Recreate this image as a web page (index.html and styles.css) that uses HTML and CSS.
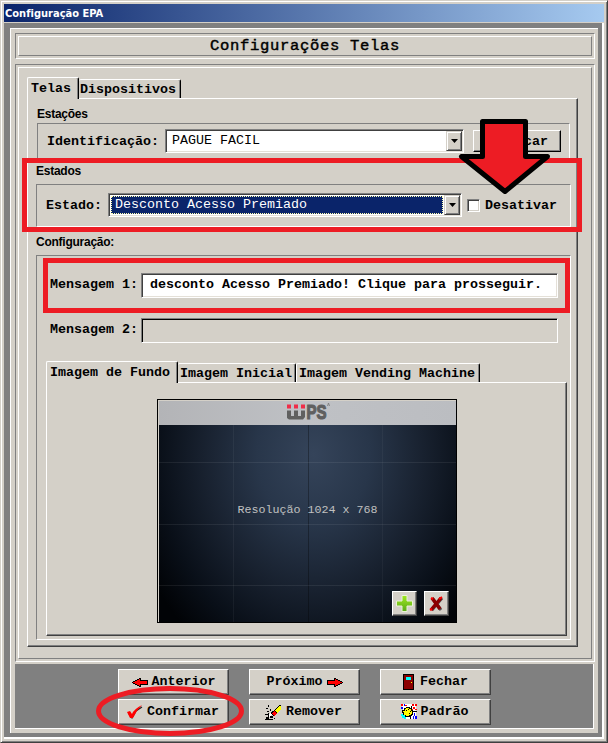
FILE: index.html
```html
<!DOCTYPE html>
<html lang="pt-BR">
<head>
<meta charset="utf-8">
<title>Configuração EPA</title>
<link rel="stylesheet" href="styles.css">
</head>
<body>
<div class="window">
  <div class="titlebar"><span>Configuração EPA</span></div>
  <div class="client">
    <div class="panel">
      <div class="header"><h1>Configurações Telas</h1></div>
      <div class="main"><div class="main-inner">
        <div class="tabs">
          <div class="tab active tab-telas">Telas</div>
          <div class="tab tab-disp">Dispositivos</div>
        </div>
        <div class="page page-outer">
          <div class="legend legend-first">Estações</div>
          <div class="group stations">
            <span class="label label-ident">Identificação:</span>
            <div class="combo combo-ident"><span class="value">PAGUE FACIL</span><span class="drop"><svg width="7" height="4"><path d="M0 0h7L3.500 4z"/></svg></span></div>
            <button class="search">Buscar</button>
          </div>
          <div class="legend legend-states">Estados</div>
          <div class="group states">
            <span class="label label-state">Estado:</span>
            <div class="combo combo-state"><span class="value selected">Desconto Acesso Premiado</span><span class="drop"><svg width="7" height="4"><path d="M0 0h7L3.500 4z"/></svg></span></div>
            <span class="check"></span><span class="label">Desativar</span>
          </div>
          <div class="legend legend-config">Configuração:</div>
          <div class="group config">
            <div class="field"><span class="label label-msg">Mensagem 1:</span><div class="input">desconto Acesso Premiado! Clique para prosseguir.</div></div>
            <div class="field"><span class="label label-msg">Mensagem 2:</span><div class="input disabled"></div></div>
            <div class="tabs tabs-images">
              <div class="tab active tab-fundo">Imagem de Fundo</div>
              <div class="tab tab-inicial">Imagem Inicial</div>
              <div class="tab tab-vending">Imagem Vending Machine</div>
            </div>
            <div class="page page-inner">
              <div class="preview">
                <div class="band">
                  <svg class="logo" width="46" height="24" viewBox="0 0 46 24">
                    <text x="19.500" y="18" textLength="20" lengthAdjust="spacingAndGlyphs">PS</text>
                    <path class="stem" d="M0 9.500h4V15h3V9.500h4V15h3V9.500h4V16l-2 2.500H2L0 17z"/>
                    <path class="red" d="M0 3.500h4v4H0zM7 3.500h4v4H7zM14 3.500h4v4h-4z"/>
                    <path class="mark" d="M40.500 5l1-3 1 3"/>
                  </svg>
                </div>
                <div class="canvas">
                  <span class="resolution">Resolução 1024 x 768</span>
                  <div class="actions">
                    <button class="mini"><svg width="17" height="17"><defs><linearGradient id="g" x2="0" y2="1"><stop stop-color="#a0e820"/><stop offset="1" stop-color="#5aaa18"/></linearGradient></defs><path d="M6 .5h5V6h5.500v5H11v5.500H6V11H.5V6H6z" fill="url(#g)" stroke="#e9f3d5"/></svg></button>
                    <button class="mini"><svg width="15" height="16"><path d="M4 3l8 11M13 2L3 14" stroke="#555" stroke-width="3"/><path d="M3 2l8 11M12 2L2 14" stroke="#8b0000" stroke-width="3.500"/><path d="M10 3l3-2M1 14l2-1M2 2l2 1" stroke="#f00" stroke-width="2"/></svg></button>
                  </div>
                </div>
              </div>
            </div>
          </div>
        </div>
      </div></div>
      <div class="footer">
        <button class="command"><svg class="px" width="16" height="9"><path d="M0 4h1V3h2V2h2V1h2V0h2v2h7v5H9v2H7V8H5V7H3V6H1V5H0z"/><path fill="red" d="M1 4h2V3h2V2h2V1h1v2h7v3H8v2H7V7H5V6H3V5H1z"/></svg>Anterior</button>
        <button class="command">Próximo<svg class="px" width="16" height="9"><path d="M16 4h-1V3h-2V2h-2V1H9V0H7v2H0v5h7v2h2V8h2V7h2V6h2V5h1z"/><path fill="red" d="M15 4h-2V3h-2V2H9V1H8v2H1v3h7v2h1V7h2V6h2V5h2z"/></svg></button>
        <button class="command"><svg class="px door" width="11" height="16"><path d="M0 0h11v16H0z"/><path fill="#8b0000" d="M1 1h9v14H1z"/><path fill="#0ff" d="M3 3h5v3H3z"/><path fill="#ff0" d="M8 8h1v1H8z"/></svg>Fechar</button>
        <button class="command confirm"><svg width="16" height="14"><path d="M1 8l3 4L8 5l6-4" fill="none" stroke="#222" stroke-width="1.200" transform="translate(1 1)"/><path fill="red" d="M0 7l3-1 2 3q2-5 10-9-6 6-9 13H3z"/></svg>Confirmar</button>
        <button class="command shifted"><svg class="px" width="17" height="17"><path d="M8 7l6-6h2v4l-7 7-4-3z"/><path fill="#ff0" d="M10 6l4-4h2v3l-4 4z"/><path fill="red" d="M7 9l2-2 3 2-3 3z"/><path fill="#fff" d="M5 9l2 1-2 3-2-1z"/><path d="M3 1h1v2H3zM1 4h2v1H1zM5 5h1v2H5zM2 7h2v1H2zM0 10h3v1H0zM3 9h1v4H3zM5 12h3v2H5zM1 13h3v2h4v1H0v-1h1zM9 14h1v1H9z"/></svg>Remover</button>
        <button class="command shifted"><svg class="px" width="16" height="16"><path fill="#fff" d="M1 0h14v15H3z"/><path fill="red" d="M0 0h2v2H0zM4 1h2v1H4zM11 0h2v2h-2zM14 0h2v2h-2zM12 3h2v2h-2zM10 5h2v1h-2zM14 5h2v1h-2z"/><path fill="#00f" d="M0 3h2v2H0zM3 0h1v2H3zM13 9h1v3h-1zM12 12h1v3h-1zM14 12h2v3h-2z"/><path d="M5 3h4v1h2v2h1v5h-1v1H9v1H4v-1H2V9H1V6h2V4h2zM10 2h1v2h-1zM12 7h4v1h-4zM9 12h1v3H9z"/><path fill="#ff0" d="M5 4h3v1h2v2h1v3h-1v1H8v1H5v-1H3V8H2V7h2V5h1z"/><path d="M5 6h1v1H5zM7 5h1v1H7zM9 7h1v1H9zM8 9h1v1H8z"/><path fill="#0ff" d="M0 10h2v1h2v2h1v2H3v-1H1v-2H0z"/></svg>Padrão</button>
      </div>
    </div>
  </div>
  <div class="highlight highlight-states"></div>
  <div class="highlight highlight-message"></div>
  <svg class="pointer" width="94" height="78"><path d="M24.500 3.500h43v35h22L47 73.500 3.500 38.500h21z"/></svg>
  <svg class="ring" width="148" height="50"><ellipse cx="74" cy="25" rx="71.500" ry="22.500"/></svg>
</div>
</body>
</html>
```
FILE: styles.css
```css
* { box-sizing: border-box; }
body { margin: 0; }
h1 { margin: 0; }
svg { display: block; flex: none; }
.px { shape-rendering: crispEdges; }

.window {
  position: relative;
  width: 608px;
  height: 743px;
  padding: 3px;
  background: #d4d0c8;
  border: 1px solid;
  border-color: #d4d0c8 #404040 #404040 #d4d0c8;
  box-shadow: inset 1px 1px #fff, inset -1px -1px #808080;
  font: bold 13.333px/16px "Liberation Mono", monospace;
  color: #000;
  overflow: hidden;
}
.titlebar {
  width: 600px;
  height: 18px;
  padding-left: 1px;
  background: linear-gradient(90deg, #0a246a, #a6caf0);
  color: #fff;
  font: bold 11px/19px "DejaVu Sans Condensed", "DejaVu Sans", sans-serif;
  letter-spacing: .02px;
}
.client {
  width: 600px;
  height: 716px;
  margin-top: 1px;
  padding: 5px 4px 4px 6px;
  background: #808080;
  border: solid #fff;
  border-width: 0 2px 2px 0;
}
.panel {
  height: 705px;
  padding: 4px 3px 4px 4px;
  background: #d4d0c8;
  border: solid #fff;
  border-width: 1px 0 0 1px;
}
.header, .main {
  padding: 2px;
  border: 1px solid;
  border-color: #808080 #fff #fff #808080;
}
.header { height: 26px; }
.header h1, .main-inner {
  height: 100%;
  border: 1px solid;
  border-color: #fff #808080 #808080 #fff;
}
.header h1 {
  font-size: 15.500px;
  font-weight: normal;
  -webkit-text-stroke: .45px #000;
  line-height: 18px;
  letter-spacing: .7px;
  text-align: center;
}
.main { height: 598px; margin-top: 5px; }
.main-inner { padding: 9px 13px 0 8px; }

.tabs { display: flex; align-items: flex-end; height: 21px; }
.tab {
  height: 19px;
  padding: 2px 0 0 1px;
  border: solid;
  border-width: 1px 1px 0 0;
  border-color: #fff #000 #000 #fff;
  border-radius: 2px 2px 0 0;
  box-shadow: inset -1px 0 #808080;
  white-space: nowrap;
}
.tab.active {
  height: 22px;
  margin-bottom: -1px;
  padding: 3px 0 0 3px;
  border-left-width: 1px;
  background: #d4d0c8;
  z-index: 1;
}
.tab-telas { width: 52px; }
.tab-disp { width: 102px; }
.tab-fundo { width: 132px; }
.tab-inicial { width: 118px; padding-left: 2px; }
.tab-vending { width: 184px; padding-left: 2px; border-left-width: 1px; }

.page {
  border: 1px solid;
  border-color: #fff #404040 #404040 #fff;
  box-shadow: inset -1px -1px #808080;
}
.page-outer { height: 549px; padding-left: 8px; }
.page-inner { width: 521px; height: 254px; padding: 16px 0 0 110px; }

.legend {
  height: 24px;
  padding: 8px 0 0 0;
  font: bold 12px/14px "Liberation Sans", sans-serif;
  letter-spacing: -.25px;
}
.legend-first { padding-left: 1px; }
.legend-states { padding-top: 4px; }
.legend-config { height: 28px; }

.group {
  display: flex;
  align-items: flex-start;
  width: 535px;
  border: 1px solid;
  border-color: #808080 #fff #fff #808080;
}
.stations { width: 533px; height: 37px; margin-left: 1px; padding: 5px 0 0 9px; }
.states { height: 43px; padding: 8px 0 0 9px; }
.config { display: block; height: 385px; padding: 17px 0 0 9px; }
.label { line-height: 25px; white-space: nowrap; }
.label-ident { width: 118px; }
.label-state { width: 62px; }
.label-msg { width: 91px; line-height: 24px; }

.combo, .input {
  border: 1px solid;
  border-color: #808080 #fff #fff #808080;
  box-shadow: inset 1px 1px #404040, inset -1px -1px #e4e0d8;
  background: #fff;
}
.combo { display: flex; height: 24px; padding: 1px; font-weight: normal; }
.combo-ident { width: 299px; }
.combo-state { width: 354px; }
.value { flex: 1; padding-left: 5px; line-height: 19px; white-space: pre; }
.selected {
  margin: 1px;
  padding-left: 3px;
  line-height: 16px;
  background: #0a246a;
  border: 1px dotted #ffffb0;
  color: #fff;
}
.drop {
  display: grid;
  place-items: center;
  width: 16px;
  background: #d4d0c8;
  border: 1px solid;
  border-color: #d4d0c8 #404040 #404040 #d4d0c8;
  box-shadow: inset 1px 1px #fff, inset -1px -1px #808080;
}
.check {
  width: 13px;
  height: 13px;
  margin: 6px 5px 0;
  background: #fff;
  border: 1px solid;
  border-color: #808080 #fff #fff #808080;
  box-shadow: inset 1px 1px #404040, inset -1px -1px #d4d0c8;
}
button {
  display: flex;
  align-items: center;
  justify-content: center;
  padding: 0;
  font: inherit;
  color: #000;
  background: #d4d0c8;
  border: 1px solid;
  border-color: #fff #404040 #404040 #fff;
  box-shadow: inset -1px -1px #808080;
}
.search { width: 88px; height: 22px; margin: 1px 0 0 9px; padding: 1px 0 0 14px; border-right-color: #000; border-bottom-color: #000; }

.field { display: flex; height: 25px; margin: 0 0 20px 4px; }
.input { width: 417px; padding-left: 8px; line-height: 21px; white-space: pre; }
.disabled { background: #d4d0c8; box-shadow: inset 1px 1px #000; }
.field + .tabs { margin-top: -2px; }

.preview {
  width: 300px;
  height: 224px;
  padding: 1px 0 0 1px;
  border: 1px solid #000;
}
.band {
  display: flex;
  justify-content: center;
  height: 24px;
  background: linear-gradient(90deg, #b3b4b7, #bfc1c5 50%, #bbbdc1);
}
.logo { margin: 0 0 0 4px; overflow: visible; }
.logo text { font: bold 20px "Liberation Sans", sans-serif; fill: #606060; stroke: #606060; stroke-width: 1.2; }
.logo .stem { fill: #606060; }
.logo .red { fill: #f02d48; }
.logo .mark { fill: none; stroke: #777; stroke-width: .8; }
.canvas {
  display: flex;
  flex-direction: column;
  justify-content: space-between;
  height: 197px;
  padding: 76px 7px 6px;
  background:
    linear-gradient(#ffffff12, #ffffff12) 0 37px / 100% 1px no-repeat,
    linear-gradient(#ffffff12, #ffffff12) 0 99px / 100% 1px no-repeat,
    linear-gradient(#ffffff12, #ffffff12) 0 160px / 100% 1px no-repeat,
    linear-gradient(#ffffff0c, #ffffff0c) 74px 0 / 1px 100% no-repeat,
    linear-gradient(#00000050, #00000050) 149px 0 / 1px 100% no-repeat,
    linear-gradient(#ffffff0a, #ffffff0a) 223px 0 / 1px 100% no-repeat,
    radial-gradient(ellipse 190px 235px at 52% 15%, #35445a 0, #28364a 30%, #18212f 58%, #090f18 82%, #010306 100%);
}
.resolution {
  font-weight: normal;
  font-size: 11.667px;
  line-height: 19px;
  text-align: center;
  color: #c0c0c0;
}
.actions { display: flex; justify-content: flex-end; gap: 7px; }
.mini { width: 25px; height: 25px; }

.footer {
  display: grid;
  grid-template-columns: repeat(3, 111px);
  grid-auto-rows: 26px;
  gap: 4px 20px;
  width: 579px;
  height: 65px;
  margin-top: 2px;
  padding: 5px 0 0 103px;
  background: #808080;
  border: solid #fff;
  border-width: 0 1px 1px 0;
}
.command { gap: 4px; }
.shifted { padding-right: 2px; }
.confirm { padding-right: 1px; }
.door { margin-right: 2px; }

.highlight { position: absolute; border: 5px solid #ed1c24; }
.highlight-states { left: 21px; top: 157px; width: 560px; height: 74px; }
.highlight-message { left: 42px; top: 257px; width: 527px; height: 55px; }
.pointer { position: absolute; left: 457px; top: 117px; fill: #ed1c24; stroke: #000; stroke-width: 5; stroke-linejoin: round; }
.ring { position: absolute; left: 95px; top: 685px; fill: none; stroke: #ed1c24; stroke-width: 5; }
```
